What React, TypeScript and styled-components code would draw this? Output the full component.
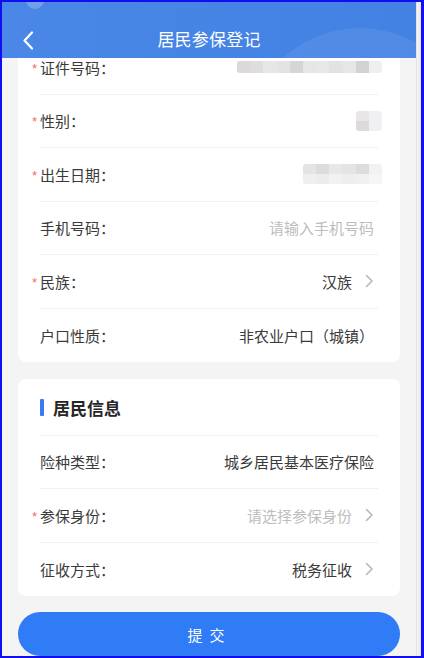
import React from "react";
import styled, { createGlobalStyle } from "styled-components";

const Global = createGlobalStyle`
  html, body { margin: 0; padding: 0; background: #ffffff; }
  body { font-family: "Noto Sans CJK SC", "Noto Sans", sans-serif; }
  * { box-sizing: border-box; }
`;

const Frame = styled.div`
  width: 424px;
  height: 658px;
  border: 2px solid #0f0ff2;
  border-right-width: 3px;
  display: flex;
  overflow: hidden;
`;

const Main = styled.div`
  flex: 1;
  display: flex;
  flex-direction: column;
  background: #f4f4f4;
  min-width: 0;
`;

const ScrollTrack = styled.div`
  width: 5px;
  background: linear-gradient(90deg, #f6f6f6, #e6e6e6);
  border-left: 1px solid #e2e2e2;
`;

const Header = styled.header`
  position: relative;
  height: 56px;
  flex: none;
  padding-top: 19px;
  background: linear-gradient(90deg, #4a87e6 0%, #4584e4 60%, #4382e2 100%);
  overflow: hidden;
  z-index: 2;
`;

const Bubble = styled.div<{ $size: number; $left: number; $top: number; $alpha: number }>`
  position: absolute;
  width: ${(p) => p.$size}px;
  height: ${(p) => p.$size}px;
  left: ${(p) => p.$left}px;
  top: ${(p) => p.$top}px;
  border-radius: 50%;
  background: rgba(255, 255, 255, ${(p) => p.$alpha});
  pointer-events: none;
`;

const Nav = styled.div`
  position: relative;
  height: 37px;
  display: flex;
  align-items: center;
  justify-content: center;
`;

const BackButton = styled.button`
  position: absolute;
  left: 16px;
  top: 8px;
  width: 20px;
  height: 22px;
  padding: 0;
  border: none;
  background: transparent;
  display: flex;
  align-items: center;
  justify-content: center;
`;

const Title = styled.h1`
  margin: 0;
  font-size: 17px;
  font-weight: 400;
  color: #ffffff;
  letter-spacing: 0.2px;
  transform: translateY(-1px);
`;

const Body = styled.main`
  flex: 1;
  overflow: hidden;
  padding: 0 16px;
  display: flex;
  flex-direction: column;
`;

const Card = styled.section<{ $offset?: number }>`
  background: #ffffff;
  border-radius: 8px;
  padding: 0 22px;
  margin-top: ${(p) => p.$offset ?? 17}px;
  flex: none;
`;

const SectionHead = styled.div`
  height: 56.5px;
  display: flex;
  align-items: center;
  gap: 9px;
  border-bottom: 1px solid #f1f1f1;
  padding-top: 1px;
`;

const SectionBar = styled.span`
  width: 4px;
  height: 17px;
  border-radius: 1px;
  background: #3a7cf0;
`;

const SectionTitle = styled.h2`
  margin: 0;
  font-size: 17px;
  font-weight: 700;
  color: #262626;
`;

const Row = styled.div<{ $last?: boolean }>`
  height: 53.5px;
  display: flex;
  align-items: center;
  justify-content: space-between;
  border-bottom: ${(p) => (p.$last ? "none" : "1px solid #f1f1f1")};
`;

const Label = styled.span`
  display: flex;
  align-items: center;
  font-size: 15px;
  color: #3a3a3a;
  white-space: nowrap;
`;

const Star = styled.span`
  width: 8px;
  margin-left: -8px;
  color: #f26b6b;
  font-size: 13px;
  line-height: 1;
  padding-top: 2px;
  font-family: "Liberation Sans", sans-serif;
`;

const Value = styled.span`
  display: flex;
  align-items: center;
  white-space: nowrap;
  margin-right: 4px;
`;

const ValueText = styled.span<{ $placeholder?: boolean }>`
  font-size: 15px;
  color: ${(p) => (p.$placeholder ? "#bdbdbd" : "#3a3a3a")};
`;

const Arrow = styled.svg`
  margin-left: 12px;
  flex: none;
`;

const MosaicGrid = styled.div<{ $cols: number; $cell: number; $rowH: number }>`
  display: grid;
  grid-template-columns: repeat(${(p) => p.$cols}, ${(p) => p.$cell}px);
  grid-auto-rows: ${(p) => p.$rowH}px;
  margin-right: -8px;
  border-radius: 3px;
  overflow: hidden;
`;

const MosaicCell = styled.span<{ $c: string }>`
  background: ${(p) => p.$c};
`;

const SubmitButton = styled.button`
  flex: none;
  margin-top: 16px;
  height: 44px;
  border: none;
  border-radius: 22px;
  background: #2f7cf6;
  color: #ffffff;
  font-family: "Noto Sans CJK SC", sans-serif;
  font-size: 15px;
  letter-spacing: 7px;
  padding-left: 7px;
`;

const Mosaic: React.FC<{ rows: string[][]; cell: number; rowH: number }> = ({ rows, cell, rowH }) => (
  <MosaicGrid $cols={rows[0].length} $cell={cell} $rowH={rowH}>
    {rows.flat().map((c, i) => (
      <MosaicCell key={i} $c={c} />
    ))}
  </MosaicGrid>
);

const Chevron = () => (
  <Arrow width="10" height="14" viewBox="0 0 10 14">
    <path d="M2.5 1.5 L8 7 L2.5 12.5" fill="none" stroke="#b8b8b8" strokeWidth="1.6" strokeLinecap="round" strokeLinejoin="round" />
  </Arrow>
);

type Item = {
  label: string;
  required?: boolean;
  value?: string;
  placeholder?: string;
  arrow?: boolean;
  mosaic?: { rows: string[][]; cell: number; rowH: number };
};

const basic: Item[] = [
  {
    label: "证件号码：",
    required: true,
    mosaic: {
      cell: 13.2,
      rowH: 12,
      rows: [["#ddd9d8", "#dedede", "#e6e6e6", "#e3e3e3", "#d6d6d6", "#e6e6e6", "#e8e8e8", "#e2e2e2", "#e6e6e6", "#d2d2d2", "#efefef"]],
    },
  },
  {
    label: "性别：",
    required: true,
    mosaic: {
      cell: 13,
      rowH: 10,
      rows: [
        ["#e8e6e6", "#f0f0f2"],
        ["#dcdada", "#eef0f2"],
      ],
    },
  },
  {
    label: "出生日期：",
    required: true,
    mosaic: {
      cell: 13.2,
      rowH: 10,
      rows: [
        ["#e6e4e2", "#dcdcdc", "#e8e8e8", "#e4e4e4", "#dcdcdc", "#f2f2f2"],
        ["#f0efef", "#ececec", "#f2f2f2", "#eeeeee", "#f0f0f0", "#f6f6f6"],
      ],
    },
  },
  { label: "手机号码：", placeholder: "请输入手机号码" },
  { label: "民族：", required: true, value: "汉族", arrow: true },
  { label: "户口性质：", value: "非农业户口（城镇）" },
];

const resident: Item[] = [
  { label: "险种类型：", value: "城乡居民基本医疗保险" },
  { label: "参保身份：", required: true, placeholder: "请选择参保身份", arrow: true },
  { label: "征收方式：", value: "税务征收", arrow: true },
];

const FormRow: React.FC<{ item: Item; last: boolean }> = ({ item, last }) => (
  <Row $last={last}>
    <Label>
      {item.required && <Star>*</Star>}
      {item.label}
    </Label>
    <Value>
      {item.mosaic && <Mosaic {...item.mosaic} />}
      {item.value && <ValueText>{item.value}</ValueText>}
      {item.placeholder && <ValueText $placeholder>{item.placeholder}</ValueText>}
      {item.arrow && <Chevron />}
    </Value>
  </Row>
);

export default function App() {
  return (
    <>
      <Global />
      <Frame>
        <Main>
          <Header>
            <Bubble $size={18} $left={24} $top={-11} $alpha={0.22} />
            <Bubble $size={228} $left={244} $top={26} $alpha={0.07} />
            <Nav>
              <BackButton aria-label="返回">
                <svg width="12" height="19" viewBox="0 0 12 19">
                  <path d="M10 1.5 L2.5 9.5 L10 17.5" fill="none" stroke="#ffffff" strokeWidth="2.2" strokeLinecap="round" strokeLinejoin="round" />
                </svg>
              </BackButton>
              <Title>居民参保登记</Title>
            </Nav>
          </Header>
          <Body>
            <Card $offset={-17}>
              {basic.map((it, i) => (
                <FormRow key={it.label} item={it} last={i === basic.length - 1} />
              ))}
            </Card>
            <Card>
              <SectionHead>
                <SectionBar />
                <SectionTitle>居民信息</SectionTitle>
              </SectionHead>
              {resident.map((it, i) => (
                <FormRow key={it.label} item={it} last={i === resident.length - 1} />
              ))}
            </Card>
            <SubmitButton>提交</SubmitButton>
          </Body>
        </Main>
        <ScrollTrack />
      </Frame>
    </>
  );
}
